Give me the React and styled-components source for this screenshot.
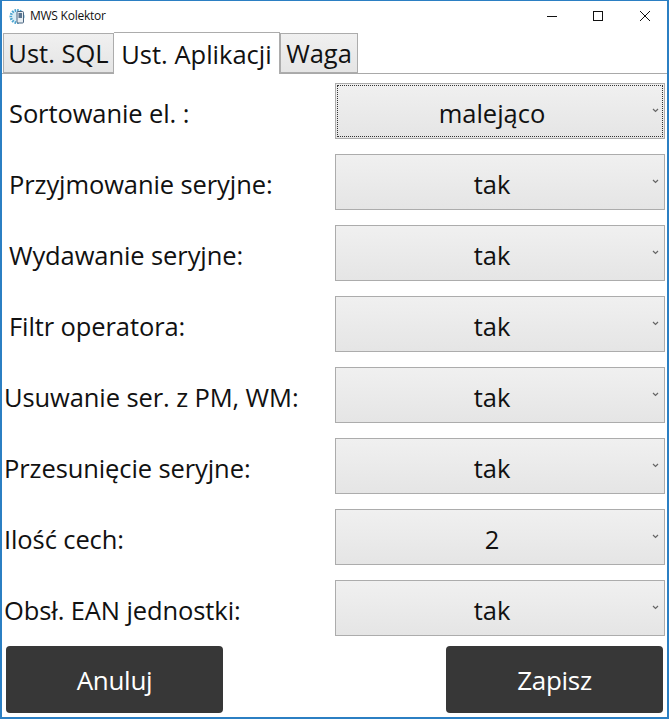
import React from 'react'
import styled, { createGlobalStyle } from 'styled-components'

const Global = createGlobalStyle`
  html, body { margin: 0; padding: 0; background: #fff; }
  * { box-sizing: border-box; }
`

const Window = styled.div`
  width: 669px;
  height: 719px;
  display: flex;
  flex-direction: column;
  background: #fff;
  border: 1px solid #2b7fc3;
  border-left-width: 2px;
  border-right-width: 2px;
  border-bottom-width: 2px;
  font-family: "Open Sans", "Noto Sans", sans-serif;
  color: #111;
  overflow: hidden;
`

const TitleBar = styled.div`
  height: 30px;
  flex: none;
  display: flex;
  align-items: center;
  padding-left: 7px;
`

const AppTitle = styled.span`
  font-size: 12px;
  letter-spacing: -0.25px;
  margin: -1px 0 0 4px;
  flex: 1;
`

const CtrlBtn = styled.div`
  width: 46px;
  height: 30px;
  display: flex;
  align-items: center;
  justify-content: center;
  padding-left: ${p => p.$nudge || 0}px;
`

const Tabs = styled.div`
  height: 43px;
  flex: none;
  display: flex;
  align-items: flex-end;
  padding-left: 1px;
  border-bottom: 1px solid #a9a9a9;
`

const Tab = styled.div`
  width: ${p => p.$w}px;
  height: ${p => (p.$active ? 42 : 40)}px;
  margin-bottom: ${p => (p.$active ? -1 : 0)}px;
  display: flex;
  align-items: center;
  justify-content: center;
  font-size: 25.5px;
  background: ${p => (p.$active ? '#fff' : 'linear-gradient(#f0f0f0, #e5e5e5)')};
  border: 1px solid #acacac;
  border-bottom: ${p => (p.$active ? 'none' : '1px solid #acacac')};
  border-left: ${p => (p.$active ? 'none' : '1px solid #acacac')};
  position: relative;
  z-index: ${p => (p.$active ? 1 : 0)};
`

const Form = styled.div`
  display: flex;
  flex-direction: column;
  gap: 15px;
  padding: 9px 2px 0 0;
`

const Row = styled.div`
  height: 56px;
  display: flex;
  align-items: center;
  justify-content: space-between;
`

const Label = styled.span`
  font-size: 25.5px;
  letter-spacing: -0.1px;
  padding: 4px 0 0 ${p => (p.$flush ? 2 : 7)}px;
  white-space: nowrap;
`

const Select = styled.div`
  width: 330px;
  height: 56px;
  flex: none;
  position: relative;
  display: flex;
  align-items: center;
  justify-content: center;
  font-size: 25.5px;
  padding: 4px 16px 0 0;
  background: linear-gradient(#f0f0f0, #e5e5e5);
  border: 1px solid #acacac;
`

const FocusRing = styled.div`
  position: absolute;
  inset: 1px;
  border: 1px dotted #333;
`

const Chevron = styled.svg`
  position: absolute;
  right: 5px;
  top: 24px;
  width: 7px;
  height: 5px;
`

const Footer = styled.div`
  display: flex;
  justify-content: space-between;
  padding: 10px 4px 0;
`

const Button = styled.div`
  width: 217px;
  height: 67px;
  display: flex;
  align-items: center;
  justify-content: center;
  background: #373737;
  color: #fff;
  border-radius: 4px;
  font-size: 26px;
  letter-spacing: -0.3px;
`

const rows = [
  { label: 'Sortowanie el. :', value: 'malejąco', focus: true },
  { label: 'Przyjmowanie seryjne:', value: 'tak' },
  { label: 'Wydawanie seryjne:', value: 'tak' },
  { label: 'Filtr operatora:', value: 'tak' },
  { label: 'Usuwanie ser. z PM, WM:', value: 'tak', flush: true },
  { label: 'Przesunięcie seryjne:', value: 'tak', flush: true },
  { label: 'Ilość cech:', value: '2', flush: true },
  { label: 'Obsł. EAN jednostki:', value: 'tak', flush: true },
]

const AppIcon = () => (
  <svg width="17" height="17" viewBox="0 0 17 17">
    <circle cx="8" cy="8.5" r="6.2" fill="#d8ecf6" stroke="#4aa3cf" strokeWidth="2.6" strokeDasharray="1.6 1" />
    <rect x="8" y="3.5" width="6.5" height="11.5" rx="1" fill="#e6edf2" stroke="#4a6580" />
    <rect x="9.5" y="5" width="3.5" height="5" fill="#5a7590" />
  </svg>
)

export default function App() {
  return (
    <>
      <Global />
      <Window>
        <TitleBar>
          <AppIcon />
          <AppTitle>MWS Kolektor</AppTitle>
          <CtrlBtn>
            <svg width="10" height="10" viewBox="0 0 10 10"><path d="M0 5.5H10" stroke="#111" /></svg>
          </CtrlBtn>
          <CtrlBtn>
            <svg width="10" height="10" viewBox="0 0 10 10"><rect x=".5" y=".5" width="9" height="9" fill="none" stroke="#111" /></svg>
          </CtrlBtn>
          <CtrlBtn $nudge={2}>
            <svg width="10" height="10" viewBox="0 0 10 10"><path d="M0 0L10 10M10 0L0 10" stroke="#111" /></svg>
          </CtrlBtn>
        </TitleBar>
        <Tabs>
          <Tab $w={111}>Ust. SQL</Tab>
          <Tab $active $w={166}>Ust. Aplikacji</Tab>
          <Tab $w={78}>Waga</Tab>
        </Tabs>
        <Form>
          {rows.map(r => (
            <Row key={r.label}>
              <Label $flush={r.flush}>{r.label}</Label>
              <Select>
                {r.focus && <FocusRing />}
                {r.value}
                <Chevron viewBox="0 0 7 5">
                  <path d="M1 1L3.5 3.5L6 1" fill="none" stroke="#666" strokeWidth="1.2" />
                </Chevron>
              </Select>
            </Row>
          ))}
        </Form>
        <Footer>
          <Button>Anuluj</Button>
          <Button>Zapisz</Button>
        </Footer>
      </Window>
    </>
  )
}
